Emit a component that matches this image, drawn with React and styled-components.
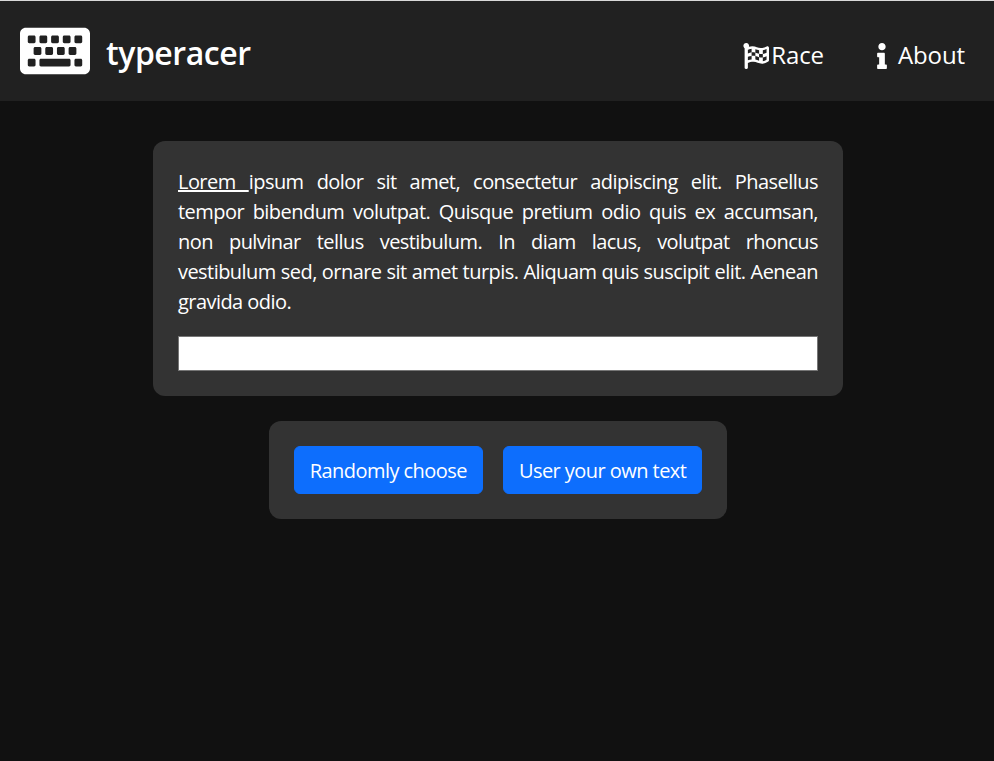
import React from "react";
import styled, { createGlobalStyle } from "styled-components";
import { FaKeyboard, FaFlagCheckered, FaInfo } from "react-icons/fa";

const Global = createGlobalStyle`
  html, body { margin: 0; padding: 0; background: #111111; }
  body { font-family: "Open Sans", "Noto Sans", sans-serif; color: #fff; }
  * { box-sizing: border-box; }
`;

const Page = styled.div`
  min-height: 761px;
  background: #111111;
  display: flex;
  flex-direction: column;
`;

const Header = styled.header`
  height: 101px;
  background: #212121;
  border-top: 1px solid #d9d9d9;
  display: flex;
  align-items: center;
  justify-content: space-between;
  padding: 0 29px 0 20px;
`;

const Brand = styled.div`
  display: flex;
  align-items: center;
  gap: 16px;
  font-size: 32px;
  font-weight: 600;
  letter-spacing: -0.45px;
`;

const BrandName = styled.span`
  padding-top: 2px;
`;

const Nav = styled.nav`
  display: flex;
  align-items: center;
  gap: 45px;
  padding-top: 4px;
`;

const NavItem = styled.a`
  display: flex;
  align-items: center;
  gap: ${(p) => p.$gap}px;
  font-size: 24px;
  letter-spacing: -0.1px;
  color: #fff;
`;

const NavLabel = styled.span`
  padding-top: 3px;
`;

const NavIcon = styled.span`
  display: flex;
  padding-top: 5px;
`;

const Main = styled.main`
  display: flex;
  flex-direction: column;
  align-items: center;
  gap: 25px;
  padding: 40px 0 0 2px;
`;

const Card = styled.section`
  background: #333333;
  border-radius: 12px;
  padding: 25px;
  width: ${(p) => p.$width || "auto"};
`;

const Passage = styled.p`
  margin: 0 0 19px;
  padding-top: 1px;
  font-size: 20px;
  line-height: 30px;
  text-align: justify;
  letter-spacing: -0.55px;
`;

const Current = styled.span`
  text-decoration: underline;
`;

const TypeInput = styled.input`
  display: block;
  width: 100%;
  height: 35px;
  background: #fff;
  border: 1px solid #767676;
  padding: 1px 2px;
`;

const Actions = styled.div`
  display: flex;
  gap: 20px;
`;

const Button = styled.button`
  height: 48px;
  padding: 0 15px;
  background: #0d6efd;
  color: #fff;
  border: 1px solid #0d6efd;
  border-radius: 6px;
  font-family: inherit;
  font-size: 20px;
  letter-spacing: -0.55px;
`;

export default function App() {
  return (
    <Page>
      <Global />
      <Header>
        <Brand>
          <FaKeyboard size={70} />
          <BrandName>typeracer</BrandName>
        </Brand>
        <Nav>
          <NavItem $gap={2}>
            <NavIcon>
              <FaFlagCheckered size={26} />
            </NavIcon>
            <NavLabel>Race</NavLabel>
          </NavItem>
          <NavItem $gap={3}>
            <NavIcon>
              <FaInfo size={26} />
            </NavIcon>
            <NavLabel>About</NavLabel>
          </NavItem>
        </Nav>
      </Header>
      <Main>
        <Card $width="690px">
          <Passage>
            <Current>Lorem&nbsp;</Current>ipsum dolor sit amet, consectetur adipiscing elit. Phasellus tempor bibendum
            volutpat. Quisque pretium odio quis ex accumsan, non pulvinar tellus vestibulum. In diam lacus, volutpat
            rhoncus vestibulum sed, ornare sit amet turpis. Aliquam quis suscipit elit. Aenean gravida odio.
          </Passage>
          <TypeInput />
        </Card>
        <Card>
          <Actions>
            <Button>Randomly choose</Button>
            <Button>User your own text</Button>
          </Actions>
        </Card>
      </Main>
    </Page>
  );
}
